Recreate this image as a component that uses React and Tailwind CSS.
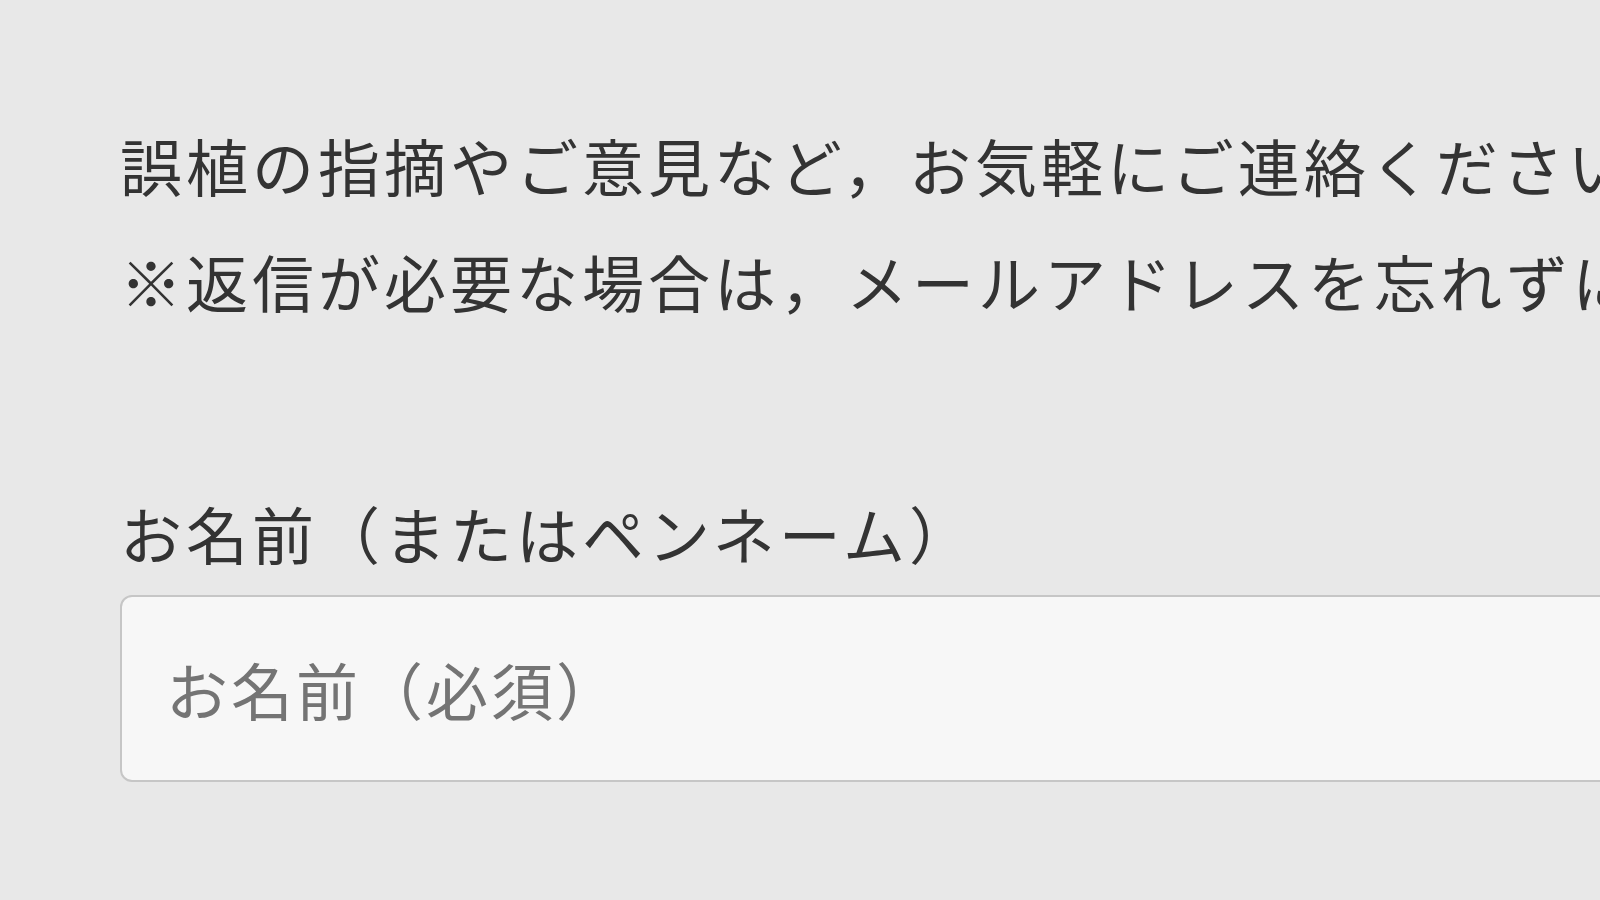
export default function App() {
  return (
    <div className="w-[1600px] h-[900px] overflow-hidden bg-[#e8e8e8] text-[#333] font-['Noto_Sans_CJK_JP','Noto_Sans',sans-serif]">
      <div className="w-[1700px] pl-[120px] pt-[107px]">
        <div className="text-[62px] leading-[116px] tracking-[4px] whitespace-nowrap">
          <p>誤植の指摘やご意見など，お気軽にご連絡ください。</p>
          <p>※返信が必要な場合は，メールアドレスを忘れずにご記入ください。</p>
        </div>
        <form className="mt-[136px]">
          <label className="block text-[62px] leading-[116px] tracking-[4px] whitespace-nowrap">
            お名前（またはペンネーム）
          </label>
          <input
            type="text"
            placeholder="お名前（必須）"
            className="mt-[4px] block w-[1560px] h-[187px] rounded-[12px] border-2 border-[#c6c6c6] bg-[#f7f7f7] px-[44px] text-[62px] tracking-[3px] placeholder:text-[#747474] outline-none"
          />
        </form>
      </div>
    </div>
  );
}
